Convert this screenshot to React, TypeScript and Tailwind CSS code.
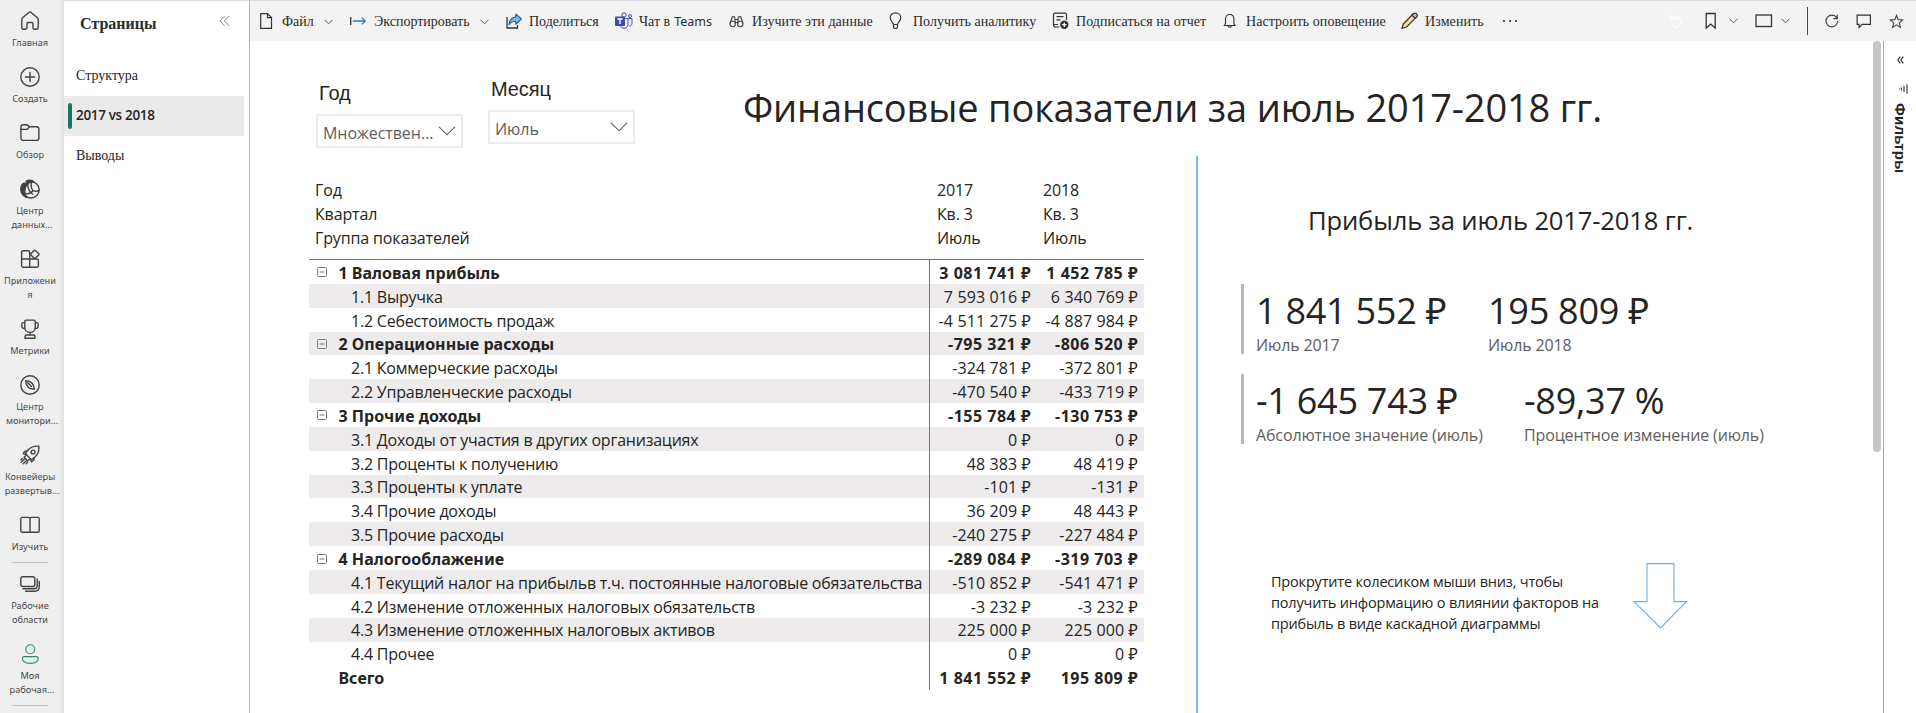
import type { ReactNode } from "react";

type NavEntry = { lines: string[]; dots?: boolean; icon: ReactNode; accent?: boolean };

const navTop: NavEntry[] = [
  {
    lines: ["Главная"],
    icon: <path d="M1.8 8.4c0-.7.3-1.3.8-1.7l6.2-5.2c.7-.6 1.7-.6 2.4 0l6.2 5.2c.5.4.8 1 .8 1.7v8.4c0 .8-.6 1.4-1.4 1.4h-2.4c-.8 0-1.4-.6-1.4-1.4v-4.3c0-.6-.4-1-1-1H8c-.6 0-1 .4-1 1v4.3c0 .8-.6 1.4-1.4 1.4H3.2c-.8 0-1.4-.6-1.4-1.4z" />,
  },
  {
    lines: ["Создать"],
    icon: (
      <>
        <circle cx="10" cy="10" r="9.2" />
        <path d="M10 5.4v9.2M5.4 10h9.2" />
      </>
    ),
  },
  {
    lines: ["Обзор"],
    icon: (
      <>
        <path d="M.9 4.2c0-1.4 1-2.4 2.4-2.4h3.2c.5 0 1 .2 1.4.6l1.5 1.3h7.1c1.4 0 2.4 1 2.4 2.4v8.9c0 1.4-1 2.4-2.4 2.4H3.3c-1.4 0-2.4-1-2.4-2.4z" />
        <path d="M.9 6.4h5.6c.5 0 .9-.2 1.3-.5l1.6-2.2" />
      </>
    ),
  },
  {
    lines: ["Центр", "данных"],
    dots: true,
    icon: (
      <>
        <path d="M3.6 4.2C1.4 6 .6 8.600.8 11c.4 3.200 2.700 6.300 5.900 7.600C4.300 15.500 3.500 8.500 8 4.500z" fill="currentColor" />
        <path d="M6.200 2.200c2.200-1.700 6.200-1.500 7.800 1-2.200-.3-5 .1-6.600 1.600z" fill="currentColor" />
        <circle cx="11" cy="10.800" r="8.200" />
        <path d="M8 4c-.6 5 1 8.500 4.600 11M4.500 14.600c3.500.8 6.500-.2 8.600-3 2.300.9 4.300.8 6-.3M12.800 11.600c-1.300-1.800-2.100-4.500-1.400-8" />
      </>
    ),
  },
  {
    lines: ["Приложени", "я"],
    icon: (
      <>
        <path d="M9.700 10V3.200c0-.8-.6-1.400-1.400-1.400H3c-.8 0-1.400.6-1.400 1.400v13.600c0 .8.600 1.400 1.400 1.400h14c.8 0 1.400-.6 1.400-1.400v-5.400c0-.8-.6-1.400-1.400-1.400zM1.600 10h8.100v8.200" />
        <path d="M14.200 1.500c.3-.3.900-.3 1.200 0l3.300 3.300c.3.300.3.900 0 1.200l-3.300 3.300c-.3.300-.9.300-1.200 0L10.900 6c-.3-.3-.3-.9 0-1.200z" />
      </>
    ),
  },
  {
    lines: ["Метрики"],
    icon: (
      <>
        <path d="M4.800 2.400c0-.8.500-1.300 1.300-1.300h7.800c.8 0 1.300.5 1.300 1.300v6c0 2.900-2.200 5-5.200 5s-5.200-2.100-5.200-5zM4.800 3.600H3.200c-.8 0-1.400.6-1.400 1.400v2c0 1.500 1.200 2.600 3 2.600M15.200 3.600h1.600c.8 0 1.400.6 1.400 1.400v2c0 1.500-1.200 2.600-3 2.600M10 13.400V16M6.600 16h6.800c.9 0 1.600.7 1.600 1.600v1.600H5v-1.600C5 16.700 5.700 16 6.600 16z" />
      </>
    ),
  },
  {
    lines: ["Центр", "монитори"],
    dots: true,
    icon: (
      <>
        <circle cx="10" cy="10" r="9.200" />
        <path d="M5.700 5.700c5.300.2 8.400 3.200 8.600 8.600-5.400-.2-8.400-3.300-8.600-8.600zM7.800 7.800l3.600 3.600" />
      </>
    ),
  },
  {
    lines: ["Конвейеры", "развертыв"],
    dots: true,
    icon: (
      <>
        <path d="M18.800 1.200c.5 4.600-.6 7.800-3.600 10.600l-3 2.500c-.4.300-1 .3-1.300-.1l-5.100-5.100c-.4-.4-.4-.9-.1-1.300l2.500-3C11 1.900 14.200.8 18.800 1.200z" />
        <circle cx="13" cy="7" r="1.900" />
        <path d="M7.400 5.600 4.600 6.400 3.200 8.600l3.200 1M14.400 12.600l-.8 2.900-2.200 1.300-1-3.200M5.600 10.800l-1.500 1.500 3.600 3.600 1.500-1.500M4.200 14.200l-3 3M6 16l-2.800 2.800M2.200 13.600 1 14.800M7.400 17.600l-1.200 1.200" />
      </>
    ),
  },
  {
    lines: ["Изучить"],
    icon: <path d="M10 3.800v12.600M2.300 2.400h6.200c.8 0 1.500.6 1.500 1.400 0-.8.7-1.400 1.500-1.400h6.200c.9 0 1.500.6 1.500 1.500v11.800c0 .9-.6 1.500-1.500 1.500h-6.200c-.8 0-1.500-.4-1.500-.8 0 .4-.7.800-1.500.800H2.300c-.9 0-1.500-.6-1.500-1.500V3.900c0-.9.600-1.500 1.500-1.500z" />,
  },
];

const navBottom: NavEntry[] = [
  {
    lines: ["Рабочие", "области"],
    icon: (
      <>
        <rect x=".8" y="2.700" width="14" height="9.800" rx="2" />
        <path d="M3 14.800h11c2 0 3.200-1.200 3.200-3.200V5M5.600 17.200h9c3 0 4.700-1.700 4.700-4.600V7.400" />
      </>
    ),
  },
  {
    lines: ["Моя", "рабочая"],
    dots: true,
    accent: true,
    icon: (
      <>
        <circle cx="10.300" cy="5.300" r="4.500" fill="#e2f4ef" />
        <path d="M4.400 12.600h11.800c1.200 0 2 .8 2 1.900 0 3-3.200 4.900-7.900 4.900s-7.900-1.900-7.900-4.900c0-1.100.8-1.900 2-1.900z" fill="#e2f4ef" />
      </>
    ),
  },
];

function NavItem({ entry }: { entry: NavEntry }) {
  return (
    <div className="flex w-[60px] shrink-0 flex-col items-center pb-[6px] pt-[11px]">
      <svg
        width="20"
        height="20"
        viewBox="0 0 20 20"
        fill="none"
        stroke="currentColor"
        strokeWidth={entry.accent ? 1.1 : 1.4}
        strokeLinejoin="round"
        strokeLinecap="round"
        className={entry.accent ? "text-[#2f8a75]" : "text-[#424242]"}
      >
        {entry.icon}
      </svg>
      <div className="mt-[5px] flex flex-col items-center text-[9.200px] leading-[14px] text-[#4a4a4a]">
        {entry.lines.map((line, i) => (
          <span key={line} className="whitespace-nowrap">
            {line}
            {entry.dots && i === entry.lines.length - 1 && <span className="-mr-[4px]">...</span>}
          </span>
        ))}
      </div>
    </div>
  );
}

function Chevron({ className = "" }: { className?: string }) {
  return (
    <svg width="9" height="6" viewBox="0 0 9 6" fill="none" stroke="#555" strokeWidth="1" className={className}>
      <path d="M.5.800 4.500 4.800 8.500.800" />
    </svg>
  );
}

function Tool({ children, icon, width, iconWidth }: { children: ReactNode; icon: ReactNode; width: string; iconWidth: string }) {
  return (
    <div className={`flex shrink-0 items-center ${width}`}>
      <div className={`shrink-0 ${iconWidth}`}>{icon}</div>
      <div className="flex items-center whitespace-nowrap pt-[2px] leading-[20px]">{children}</div>
    </div>
  );
}

const svg16 = { width: 16, height: 18, viewBox: "0 0 16 18", fill: "none", stroke: "#333", strokeWidth: 1.2 } as const;

function Toolbar() {
  return (
    <div className="flex h-[41px] shrink-0 items-center border-t border-[#dcdcdc] bg-[#f3f3f3] pl-[10px] font-['Liberation_Serif',serif] text-[14px] text-[#2b2b2b]">
      <Tool width="w-[89px]" iconWidth="w-[22px]" icon={
        <svg {...svg16}><path d="M.7 1.600h6.800L11.500 5.600v10.800H.7zM7.500 1.600v4h4" /></svg>
      }>
        Файл<Chevron className="ml-[10px]" />
      </Tool>
      <Tool width="w-[156px]" iconWidth="w-[25px]" icon={
        <svg width="18" height="18" viewBox="0 0 18 18" fill="none" strokeWidth="1.300">
          <path d="M1.700 5v8" stroke="#333" />
          <path d="M3.800 9h12.600M12.800 5.600 16.300 9l-3.500 3.400" stroke="#2a7fc4" />
        </svg>
      }>
        Экспортировать<Chevron className="ml-[10px]" />
      </Tool>
      <Tool width="w-[110px]" iconWidth="w-[24px]" icon={
        <svg width="18" height="18" viewBox="0 0 18 18" fill="none">
          <path d="M2 5v11h10.500v-3" stroke="#333" strokeWidth="1.300" />
          <path d="M10.800 2v3.100C6.900 5.300 4.500 8 4 12.800c1.800-2.500 3.800-3.500 6.800-3.500v3L16.400 7z" fill="#7dbdf0" stroke="#1c5d94" strokeWidth="1.100" strokeLinejoin="round" />
        </svg>
      }>
        Поделиться
      </Tool>
      <Tool width="w-[115px]" iconWidth="w-[24px]" icon={
        <svg width="18" height="18" viewBox="0 0 18 18">
          <circle cx="9" cy="3" r="2.200" fill="#f3f3f3" stroke="#4b53bc" />
          <circle cx="15" cy="4" r="1.500" fill="none" stroke="#4b53bc" />
          <path d="M10 6.500h7v4.500c0 2-1.200 3.200-2.800 3.200" fill="none" stroke="#4b53bc" />
          <path d="M6 6.500h7v5.700c0 2.500-1.600 4-3.800 4-1.700 0-3-.8-3.600-2.200" fill="#f3f3f3" stroke="#4b53bc" />
          <rect x="0" y="4.500" width="10" height="9.500" rx="1" fill="#4149b5" />
          <path d="M2.400 7h5.200M5 7v5" stroke="#fff" strokeWidth="1.400" />
        </svg>
      }>
        Чат в <span className="ml-[4px] font-['Noto_Sans',sans-serif] text-[12.500px]">Teams</span>
      </Tool>
      <Tool width="w-[160px]" iconWidth="w-[22px]" icon={
        <svg width="16" height="18" viewBox="0 0 16 18" fill="none" stroke="#444" strokeWidth="1.100" className="-ml-px">
          <circle cx="3.700" cy="12" r="2.700" />
          <circle cx="11.300" cy="12" r="2.700" />
          <path d="M1 11.500 3 5.500c.4-1.200 2.600-1.200 2.800.2l.6 6.300M14 11.500 12 5.500c-.4-1.200-2.600-1.200-2.800.2L8.600 12M5.900 7.500h3.200M6.200 10.500h2.600" />
        </svg>
      }>
        <span className="tracking-[0.050px]">Изучите эти данные</span>
      </Tool>
      <Tool width="w-[162px]" iconWidth="w-[23px]" icon={
        <svg width="14" height="18" viewBox="0 0 14 18" fill="none" stroke="#333" strokeWidth="1.200" className="-ml-[1px]">
          <path d="M4.500 12.500c0-2.200-3.300-3.500-3.300-6.800C1.200 2.900 3.500.900 6.500.900s5.300 2 5.300 4.800c0 3.300-3.300 4.600-3.300 6.800zM4.500 12.500v2.200c0 1.100.7 1.800 2 1.800s2-.7 2-1.800v-2.200" />
        </svg>
      }>
        Получить аналитику
      </Tool>
      <Tool width="w-[171px]" iconWidth="w-[24px]" icon={
        <svg width="17" height="18" viewBox="0 0 17 18" fill="none" stroke="#333" strokeWidth="1.200">
          <path d="M14.500 8V2.600c0-.9-.6-1.500-1.500-1.500H3C2.100 1.100 1.500 1.700 1.500 2.600v9.900M1.500 12.500H6M1.500 12.500c0 1.500.8 2.500 2.300 2.500h3.500M4.500 4.700h7M4.500 7.800h4" />
          <circle cx="12.300" cy="12.700" r="4.200" fill="#333" stroke="none" />
          <path d="M12.300 10.500v4.400M10.100 12.700h4.400" stroke="#fff" />
        </svg>
      }>
        <span className="tracking-[0.050px]">Подписаться на отчет</span>
      </Tool>
      <Tool width="w-[178px]" iconWidth="w-[23px]" icon={
        <svg width="14" height="16" viewBox="0 0 14 16" fill="none" stroke="#333" strokeWidth="1.100">
          <path d="M2.500 10.500V6.200C2.500 3.400 4.200 1.500 6.700 1.500s4.200 1.900 4.200 4.700v4.300l1.200 2H1.300zM5 12.800c.2 1 .8 1.500 1.700 1.500s1.500-.5 1.700-1.500" />
        </svg>
      }>
        <span className="tracking-[0.050px]">Настроить оповещение</span>
      </Tool>
      <Tool width="w-[101px]" iconWidth="w-[24px]" icon={
        <svg width="17" height="18" viewBox="0 0 17 18" strokeLinejoin="round" strokeWidth="1.100">
          <path d="M.9 16.500 2.300 12 12 2c1-1 2.500-1 3.400-.1.900.9.900 2.300 0 3.300L5.500 15z" fill="#f3dc92" stroke="#333" />
          <path d="m10.800 3.200 3.400 3.300L15.500 5.200c1-1 .9-2.400 0-3.300s-2.400-.9-3.400.1z" fill="#b9b5c4" stroke="#333" />
        </svg>
      }>
        <span className="tracking-[0.100px]">Изменить</span>
      </Tool>
      <svg width="16" height="4" viewBox="0 0 16 4" fill="#333">
        <circle cx="2" cy="2" r="1.100" />
        <circle cx="8" cy="2" r="1.100" />
        <circle cx="14" cy="2" r="1.100" />
      </svg>
      <div className="ml-[151px] flex h-full items-center">
        <svg width="14" height="16" viewBox="0 0 14 16" fill="none" stroke="#fbfbfb" strokeWidth="1.500">
          <path d="M2 1v5h5M2.500 6C4 3.800 7 3.200 9.500 4.500c4 2.500 3 9-2 9.500-2.500 0-4-1.200-4.700-3" />
        </svg>
        <svg width="12" height="18" viewBox="0 0 12 18" fill="none" stroke="#333" strokeWidth="1.300" className="ml-[22px]">
          <path d="M1.200 1.500h9v14.600l-4.500-4-4.500 4z" />
        </svg>
        <Chevron className="ml-[12px]" />
        <svg width="18" height="14" viewBox="0 0 18 14" fill="none" stroke="#333" strokeWidth="1.300" className="ml-[17px]">
          <rect x="1" y="1" width="15.500" height="11.500" />
        </svg>
        <Chevron className="ml-[8px]" />
        <div className="ml-[17px] h-[28px] w-px bg-[#444]" />
        <svg width="14" height="14" viewBox="0 0 14 14" fill="none" stroke="#444" strokeWidth="1.200" className="ml-[17px]">
          <path d="M12 4.500C11 2.500 9 1.200 6.800 1.200 3.600 1.200 1 3.800 1 7s2.600 5.800 5.800 5.800S12.600 10.200 12.600 7M12.300.8v3.900H8.400" />
        </svg>
        <svg width="16" height="15" viewBox="0 0 16 15" fill="none" stroke="#333" strokeWidth="1.200" className="ml-[17px]">
          <path d="M1.100 1.100h13.300v9.300H6.200l-3.100 3.100v-3.100h-2z" />
        </svg>
        <svg width="15" height="15" viewBox="0 0 15 15" fill="none" stroke="#444" strokeWidth="1.100" className="ml-[17px]">
          <path d="m7.500 1.300 1.700 4.300 4.600.3-3.500 3 1.100 4.500-3.900-2.500-3.900 2.500 1.100-4.500-3.500-3 4.600-.3z" />
        </svg>
      </div>
    </div>
  );
}

function Slicer({ label, value, className }: { label: string; value: string; className: string }) {
  return (
    <div className={className}>
      <div className="pl-[3px] font-['Liberation_Sans',sans-serif] text-[20px] leading-[24px] tracking-[-0.100px]">{label}</div>
      <div className="mt-[9px] flex h-[34px] w-[147px] items-center justify-between border-2 border-[#ececec] pl-[5px] pr-[5px] font-['Open_Sans','Noto_Sans',sans-serif] text-[16px] tracking-[-0.050px] text-[#605e5c]">
        <span className="pt-[4px]">{value}</span>
        <svg width="18" height="10" viewBox="0 0 18 10" fill="none" stroke="#605e5c" strokeWidth="1.100">
          <path d="m1 .800 8 8 8-8" />
        </svg>
      </div>
    </div>
  );
}

type Row = { label: string; a: string; b: string; kind: "group" | "item" | "total" };

const rows: Row[] = [
  { label: "1 Валовая прибыль", a: "3 081 741 ₽", b: "1 452 785 ₽", kind: "group" },
  { label: "1.1 Выручка", a: "7 593 016 ₽", b: "6 340 769 ₽", kind: "item" },
  { label: "1.2 Себестоимость продаж", a: "-4 511 275 ₽", b: "-4 887 984 ₽", kind: "item" },
  { label: "2 Операционные расходы", a: "-795 321 ₽", b: "-806 520 ₽", kind: "group" },
  { label: "2.1 Коммерческие расходы", a: "-324 781 ₽", b: "-372 801 ₽", kind: "item" },
  { label: "2.2 Управленческие расходы", a: "-470 540 ₽", b: "-433 719 ₽", kind: "item" },
  { label: "3 Прочие доходы", a: "-155 784 ₽", b: "-130 753 ₽", kind: "group" },
  { label: "3.1 Доходы от участия в других организациях", a: "0 ₽", b: "0 ₽", kind: "item" },
  { label: "3.2 Проценты к получению", a: "48 383 ₽", b: "48 419 ₽", kind: "item" },
  { label: "3.3 Проценты к уплате", a: "-101 ₽", b: "-131 ₽", kind: "item" },
  { label: "3.4 Прочие доходы", a: "36 209 ₽", b: "48 443 ₽", kind: "item" },
  { label: "3.5 Прочие расходы", a: "-240 275 ₽", b: "-227 484 ₽", kind: "item" },
  { label: "4 Налогооблажение", a: "-289 084 ₽", b: "-319 703 ₽", kind: "group" },
  { label: "4.1 Текущий налог на прибыльв т.ч. постоянные налоговые обязательства", a: "-510 852 ₽", b: "-541 471 ₽", kind: "item" },
  { label: "4.2 Изменение отложенных налоговых обязательств", a: "-3 232 ₽", b: "-3 232 ₽", kind: "item" },
  { label: "4.3 Изменение отложенных налоговых активов", a: "225 000 ₽", b: "225 000 ₽", kind: "item" },
  { label: "4.4 Прочее", a: "0 ₽", b: "0 ₽", kind: "item" },
  { label: "Всего", a: "1 841 552 ₽", b: "195 809 ₽", kind: "total" },
];

const headers = [
  ["Год", "2017", "2018"],
  ["Квартал", "Кв. 3", "Кв. 3"],
  ["Группа показателей", "Июль", "Июль"],
];

function Matrix() {
  return (
    <div className="w-[835px] whitespace-nowrap font-['Open_Sans','Noto_Sans',sans-serif] text-[16px]">
      <div className="h-[82px] border-b border-[#2f8ad2] tracking-[-0.140px]">
        {headers.map(([name, a, b]) => (
          <div key={name} className="grid h-[24px] grid-cols-[621px_107px_107px] leading-[24px]">
            <div className="pl-[6px]">{name}</div>
            <div className="pl-[7px]">{a}</div>
            <div className="pl-[6px]">{b}</div>
          </div>
        ))}
      </div>
      {rows.map((row, i) => {
        const bold = row.kind !== "item";
        const shaded = i % 2 === 1 && row.kind !== "total";
        const num = bold
          ? "pr-[6px] pt-[0.830px] text-right font-['Noto_Sans',sans-serif] tracking-[0.500px]"
          : "pr-[6px] pt-[0.830px] text-right tracking-[0.120px]";
        return (
          <div
            key={row.label}
            className={`grid h-[23.844px] grid-cols-[621px_107px_107px] leading-[24px] ${shaded ? "bg-[#edebec]" : "bg-white"} ${bold ? "font-bold" : ""}`}
          >
            <div className="flex border-r border-[#2f8ad2]">
              <div className={`flex shrink-0 items-center ${bold ? "w-[29.500px]" : "w-[42px]"} pl-[8px]`}>
                {row.kind === "group" && (
                  <svg width="10" height="10" viewBox="0 0 10 10" fill="none" stroke="#777">
                    <rect x=".5" y=".5" width="9" height="9" rx="1" />
                    <path d="M2.500 5h5" />
                  </svg>
                )}
              </div>
              <span className={`pt-[0.830px] ${bold ? "font-['Noto_Sans',sans-serif] tracking-[0.030px]" : "tracking-[-0.215px]"}`}>{row.label}</span>
            </div>
            <div className={num}>{row.a}</div>
            <div className={num}>{row.b}</div>
          </div>
        );
      })}
    </div>
  );
}

function Card({ items, first, className }: { items: [string, string][]; first: string; className: string }) {
  return (
    <div className={`ml-[43px] flex h-[70px] whitespace-nowrap border-l-[3px] border-[#b8b8b8] pl-[12px] pt-[5px] font-['Open_Sans','Noto_Sans',sans-serif] ${className}`}>
      {items.map(([value, caption], i) => (
        <div key={caption} className={i === 0 ? `shrink-0 ${first}` : ""}>
          <div className="text-[36px] leading-[44px] tracking-[-0.250px]">{value}</div>
          <div className="mt-px text-[16px] leading-[22px] tracking-[-0.130px] text-[#605e5c]">{caption}</div>
        </div>
      ))}
    </div>
  );
}

export default function App() {
  return (
    <div className="flex h-[713px] w-[1916px] overflow-hidden bg-white font-['Noto_Sans',sans-serif] text-[#252423]">
      <nav className="z-10 flex w-[64px] shrink-0 flex-col overflow-hidden bg-linear-to-r from-[#efefef] from-92% to-[#e0e0e0]">
        {navTop.map((e) => (
          <NavItem key={e.lines.join()} entry={e} />
        ))}
        <div className="ml-[12px] mt-[2px] h-px w-[36px] shrink-0 bg-[#c4c4c4]" />
        {navBottom.map((e) => (
          <NavItem key={e.lines.join()} entry={e} />
        ))}
        <div className="ml-[12px] mt-[2px] h-px w-[36px] shrink-0 bg-[#c4c4c4]" />
      </nav>

      <aside className="w-[186px] shrink-0 border-r border-t border-r-[#b5b5b5] border-t-[#dcdcdc] bg-white font-['Liberation_Serif',serif]">
        <div className="flex h-[55px] justify-between pl-[16px] pr-[19px]">
          <h2 className="mt-[12px] text-[16px] font-bold leading-[22px] text-[#2b2b2b]">Страницы</h2>
          <svg width="11" height="12" viewBox="0 0 11 12" fill="none" stroke="#888" className="mt-[14px]">
            <path d="M5.500 1.200.900 6l4.600 4.800M10 1.200 5.400 6 10 10.800" />
          </svg>
        </div>
        <ul className="text-[14px] leading-[40px]">
          <li className="h-[40px] pl-[12px]">Структура</li>
          <li className="flex h-[40px] w-[180px] items-center bg-[#eaeaea] pl-[4px]">
            <span className="mr-[4px] h-[26px] w-[4px] rounded-[2px] bg-[#117865]" />
            <span className="pb-[2px] font-['Open_Sans','Noto_Sans',sans-serif] text-[13.500px] font-semibold leading-[20px] tracking-[-0.330px]">2017 vs 2018</span>
          </li>
          <li className="h-[40px] pl-[12px]">Выводы</li>
        </ul>
      </aside>

      <div className="flex min-w-0 flex-1 flex-col">
        <Toolbar />
        <div className="flex min-h-0 flex-1">
          <main className="flex w-[1623px] shrink-0 flex-col">
            <div className="flex h-[115px] shrink-0 pl-[66px]">
              <Slicer label="Год" value="Множествен..." className="mt-[40px]" />
              <Slicer label="Месяц" value="Июль" className="ml-[25px] mt-[36px]" />
              <h1 className="ml-[108px] mt-[42px] whitespace-nowrap font-['Open_Sans','Noto_Sans',sans-serif] text-[38px] leading-[48px] tracking-[-0.170px]">
                Финансовые показатели за июль 2017-2018 гг.
              </h1>
            </div>
            <div className="flex min-h-0 flex-1">
              <section className="w-[946px] shrink-0 pl-[59px] pt-[22px]">
                <Matrix />
              </section>
              <section className="flex-1 border-l-2 border-[#7db7ef]">
                <h2 className="ml-[110px] mt-[48px] whitespace-nowrap font-['Open_Sans','Noto_Sans',sans-serif] text-[25.600px] leading-[34px] tracking-[-0.160px]">Прибыль за июль 2017-2018 гг.</h2>
                <Card className="mt-[46px]" first="w-[232px]" items={[["1 841 552 ₽", "Июль 2017"], ["195 809 ₽", "Июль 2018"]]} />
                <Card className="mt-[20px]" first="w-[268px]" items={[["-1 645 743 ₽", "Абсолютное значение (июль)"], ["-89,37 %", "Процентное изменение (июль)"]]} />
                <div className="ml-[73px] mt-[119px] flex">
                  <p className="w-[361px] pt-[8px] font-['Open_Sans','Noto_Sans',sans-serif] text-[14.500px] leading-[21px] tracking-[-0.190px]">
                    Прокрутите колесиком мыши вниз, чтобы
                    <br />
                    получить информацию о влиянии факторов на
                    <br />
                    прибыль в виде каскадной диаграммы
                  </p>
                  <svg width="56" height="66" viewBox="0 0 56 66" fill="none" stroke="#6fabe4" strokeWidth="1.100">
                    <path d="M15 .600h27v38h12.500L28.500 65 2 38.600h13z" />
                  </svg>
                </div>
              </section>
            </div>
          </main>
          <div className="h-[411px] w-[8px] shrink-0 rounded-t-[4px] rounded-b-[4px] bg-[#c6c6c6]" />
          <aside className="ml-[2px] flex flex-1 flex-col items-center border-l border-[#a8a8a8]">
            <svg width="7" height="8" viewBox="0 0 7 8" fill="none" stroke="#333" strokeWidth="1.200" className="mt-[15px]">
              <path d="M3.300.600.900 4l2.400 3.400M6.300.600 3.900 4l2.400 3.400" />
            </svg>
            <svg width="9" height="10" viewBox="0 0 9 10" fill="none" stroke="#444" strokeWidth="1.200" className="ml-[7px] mt-[20px]">
              <path d="M8 .300v9.400M5 2v6M2.500 3.500v3M.500 4.500v1" />
            </svg>
            <div className="mt-[9px] font-['Liberation_Sans',sans-serif] text-[15px] font-bold leading-[18px] tracking-[0.200px] [writing-mode:vertical-rl]">
              Фильтры
            </div>
          </aside>
        </div>
      </div>
    </div>
  );
}
